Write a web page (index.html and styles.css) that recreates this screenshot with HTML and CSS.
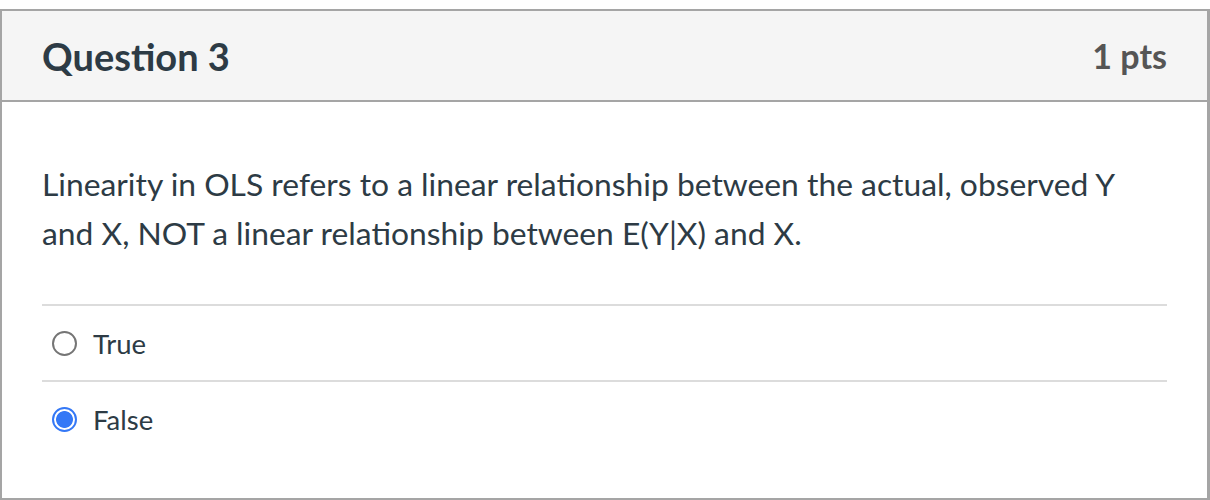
FILE: index.html
```html
<!DOCTYPE html>
<html>
<head>
<meta charset="utf-8">
<link rel="stylesheet" href="styles.css">
</head>
<body>
<div class="card">
  <div class="card-header">
    <h2 class="q-title">Question 3</h2>
    <span class="q-pts">1 pts</span>
  </div>
  <div class="card-body">
    <p class="q-text">Linearity in OLS refers to a linear relationship between the actual, observed Y and X, NOT a linear relationship between E(Y|X) and X.</p>
    <div class="answers">
      <label class="answer">
        <span class="radio"></span>
        <span class="answer-label">True</span>
      </label>
      <label class="answer">
        <span class="radio checked"></span>
        <span class="answer-label">False</span>
      </label>
    </div>
  </div>
</div>
</body>
</html>
```

FILE: styles.css
```css
html, body {
  margin: 0;
  padding: 0;
  background: #ffffff;
}
body {
  font-family: Lato, "Open Sans", sans-serif;
  color: #2d3b45;
  padding-top: 9px;
}
.card {
  box-sizing: border-box;
  width: 1210px;
  height: 491px;
  border: 2px solid #a5a5a5;
  border-right-width: 3px;
  display: flex;
  flex-direction: column;
}
.card-header {
  background: #f5f5f5;
  height: 89px;
  border-bottom: 2px solid #a5a5a5;
  display: flex;
  align-items: center;
  justify-content: space-between;
  padding: 0 40px 0 40px;
}
.q-title {
  margin: 0;
  font-size: 38px;
  font-weight: 700;
  color: #2d3b45;
  line-height: 1;
}
.q-pts {
  font-size: 34px;
  font-weight: 700;
  color: #555555;
  line-height: 1;
}
.card-body {
  padding: 58px 40px 0 40px;
}
.q-text {
  margin: 0 0 46px 0;
  font-size: 31.8px;
  line-height: 49px;
  color: #2d3b45;
}
.answers {
  display: flex;
  flex-direction: column;
}
.answer {
  display: flex;
  align-items: center;
  height: 74px;
  border-top: 2px solid #dcdcdc;
  padding-left: 10px;
  gap: 16px;
}
.answer-label {
  font-size: 27.5px;
  color: #2d3b45;
}
.radio {
  box-sizing: border-box;
  width: 25px;
  height: 25px;
  border-radius: 50%;
  border: 2px solid #757575;
  background: #fff;
}
.radio.checked {
  border: 2px solid #3478f6;
  background: radial-gradient(circle, #3478f6 0 8px, #ffffff 8.8px);
}
```
